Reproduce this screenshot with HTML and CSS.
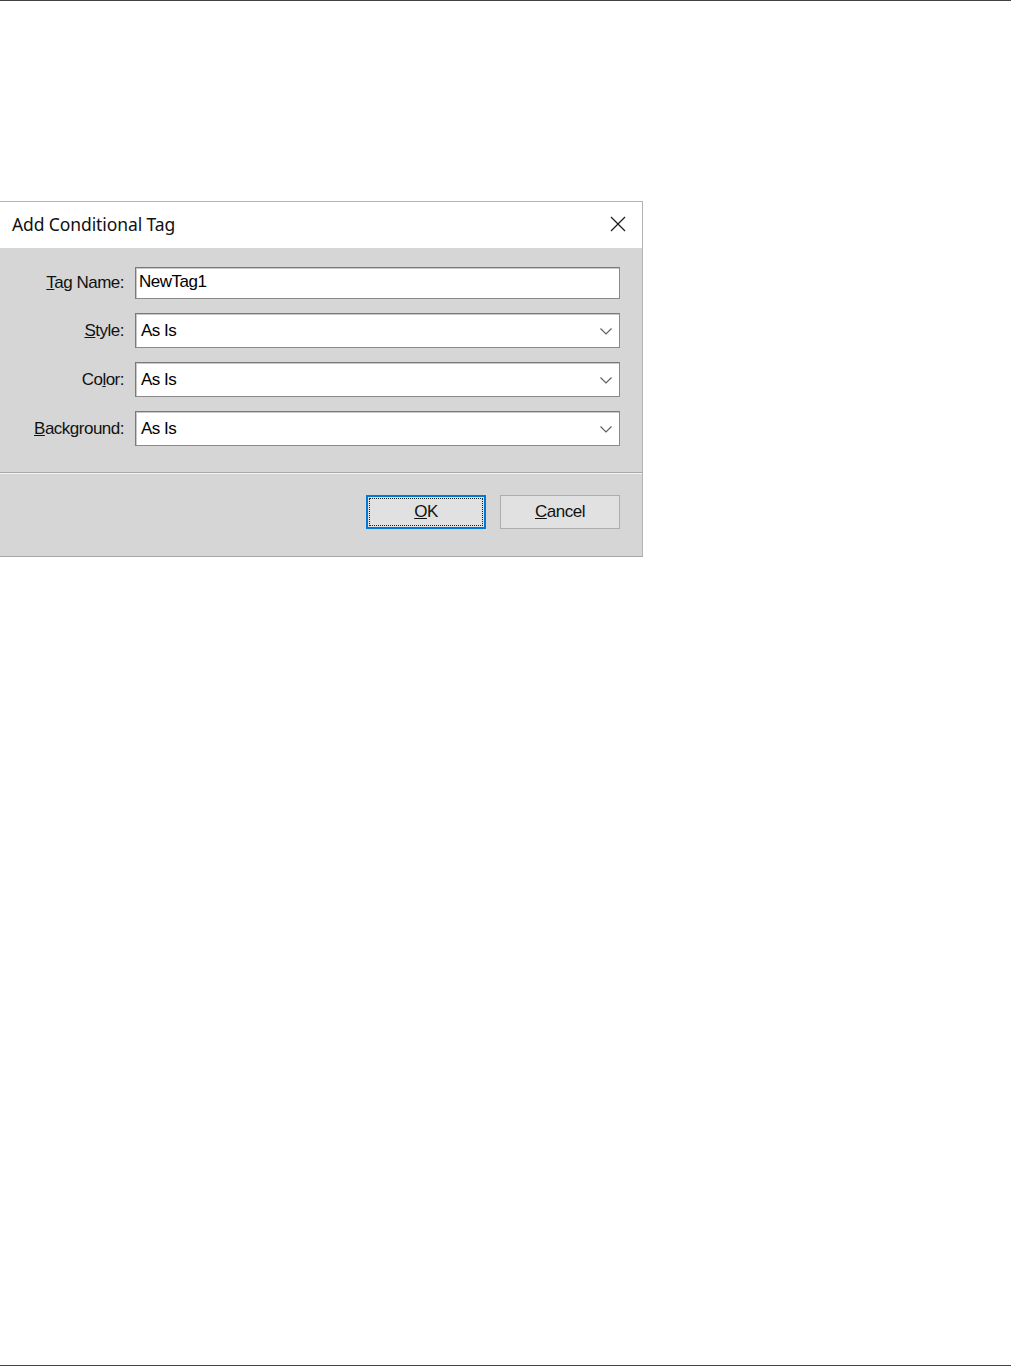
FILE: index.html
```html
<!DOCTYPE html>
<html lang="en">
<head>
    <meta charset="UTF-8">
    <meta name="viewport" content="width=device-width, initial-scale=1.0">
    <title>Add Conditional Tag</title>
    <link rel="stylesheet" href="styles.css">
</head>
<body>
    <div class="page-rule"></div>

    <div class="dialog">
        <div class="dialog-title">
            <span class="title-text">Add Conditional Tag</span>
            <span class="close-button">
                <svg width="16" height="16" viewBox="0 0 16 16">
                    <path d="M1 1 L15 15 M15 1 L1 15" stroke="#1a1a1a" stroke-width="1.2" fill="none"/>
                </svg>
            </span>
        </div>

        <div class="dialog-body">
            <label class="field-label"><u>T</u>ag Name:</label>
            <div class="text-box">NewTag1</div>

            <label class="field-label"><u>S</u>tyle:</label>
            <div class="combo-box">
                <span>As Is</span>
                <svg class="chevron" width="12" height="7" viewBox="0 0 12 7">
                    <path d="M0.5 0.5 L6 6 L11.5 0.5" stroke="#606060" stroke-width="1.2" fill="none"/>
                </svg>
            </div>

            <label class="field-label">Co<u>l</u>or:</label>
            <div class="combo-box">
                <span>As Is</span>
                <svg class="chevron" width="12" height="7" viewBox="0 0 12 7">
                    <path d="M0.5 0.5 L6 6 L11.5 0.5" stroke="#606060" stroke-width="1.2" fill="none"/>
                </svg>
            </div>

            <label class="field-label"><u>B</u>ackground:</label>
            <div class="combo-box">
                <span>As Is</span>
                <svg class="chevron" width="12" height="7" viewBox="0 0 12 7">
                    <path d="M0.5 0.5 L6 6 L11.5 0.5" stroke="#606060" stroke-width="1.2" fill="none"/>
                </svg>
            </div>
        </div>

        <div class="dialog-footer">
            <button class="win-button default-button"><span class="focus-ring"><u>O</u>K</span></button>
            <button class="win-button"><u>C</u>ancel</button>
        </div>
    </div>

    <div class="page-rule bottom-rule"></div>
</body>
</html>
```

FILE: styles.css
```css
html, body {
    height: 1367px;
}

body {
    margin: 0;
    padding: 0;
    background-color: #fff;
    display: flex;
    flex-direction: column;
    font-family: 'Liberation Sans', Arial, sans-serif;
    color: #000;
}

.page-rule {
    height: 1px;
    background-color: #444;
}

.bottom-rule {
    margin-top: auto;
    margin-bottom: 1px;
}

.dialog {
    width: 642px;
    margin-top: 200px;
    border-top: 1px solid #b4b4b4;
    border-right: 1px solid #b4b4b4;
    border-bottom: 1px solid #a6a6a6;
    background-color: #d6d6d6;
}

.dialog-title {
    height: 46px;
    background-color: #fff;
    display: flex;
    align-items: center;
    justify-content: space-between;
    padding: 0 16px 0 12px;
}

.title-text {
    font-family: 'Noto Sans', sans-serif;
    font-size: 17.5px;
    color: #111;
    letter-spacing: -0.1px;
    margin-top: -3px;
}

.close-button {
    display: flex;
    margin-top: -2px;
}

.dialog-body {
    display: grid;
    grid-template-columns: 124px 1fr;
    column-gap: 11px;
    row-gap: 14px;
    align-items: center;
    padding: 19px 22px 26px 0;
    border-bottom: 1px solid #a8a8a8;
}

.field-label {
    text-align: right;
    font-size: 17px;
    letter-spacing: -0.5px;
    color: #111;
}

.text-box,
.combo-box {
    box-sizing: border-box;
    background-color: #fff;
    border: 1px solid #8a8a8a;
    border-top-color: #7a7a7a;
    border-left-color: #7a7a7a;
    box-shadow: inset 1px 1px 0 #c8c8c8;
    font-size: 17px;
    letter-spacing: -0.5px;
}

.text-box {
    height: 32px;
    padding: 4px 0 0 3px;
}

.combo-box {
    height: 35px;
    display: flex;
    align-items: center;
    justify-content: space-between;
    padding: 0 7px 0 5px;
}

.chevron {
    display: block;
    margin-top: 2px;
}

.dialog-footer {
    display: flex;
    justify-content: flex-end;
    gap: 14px;
    height: 83px;
    box-sizing: border-box;
    padding: 21px 22px 0 0;
    border-top: 1px solid #f4f4f4;
}

.win-button {
    box-sizing: border-box;
    width: 120px;
    height: 34px;
    background-color: #e1e1e1;
    border: 1px solid #adadad;
    font-family: 'Liberation Sans', Arial, sans-serif;
    font-size: 17px;
    letter-spacing: -0.5px;
    color: #111;
    padding: 0;
}

.default-button {
    border: 2px solid #0078d7;
    padding: 1px;
}

.focus-ring {
    display: flex;
    align-items: center;
    justify-content: center;
    height: 100%;
    border: 1px dotted #222;
    box-sizing: border-box;
}
```
